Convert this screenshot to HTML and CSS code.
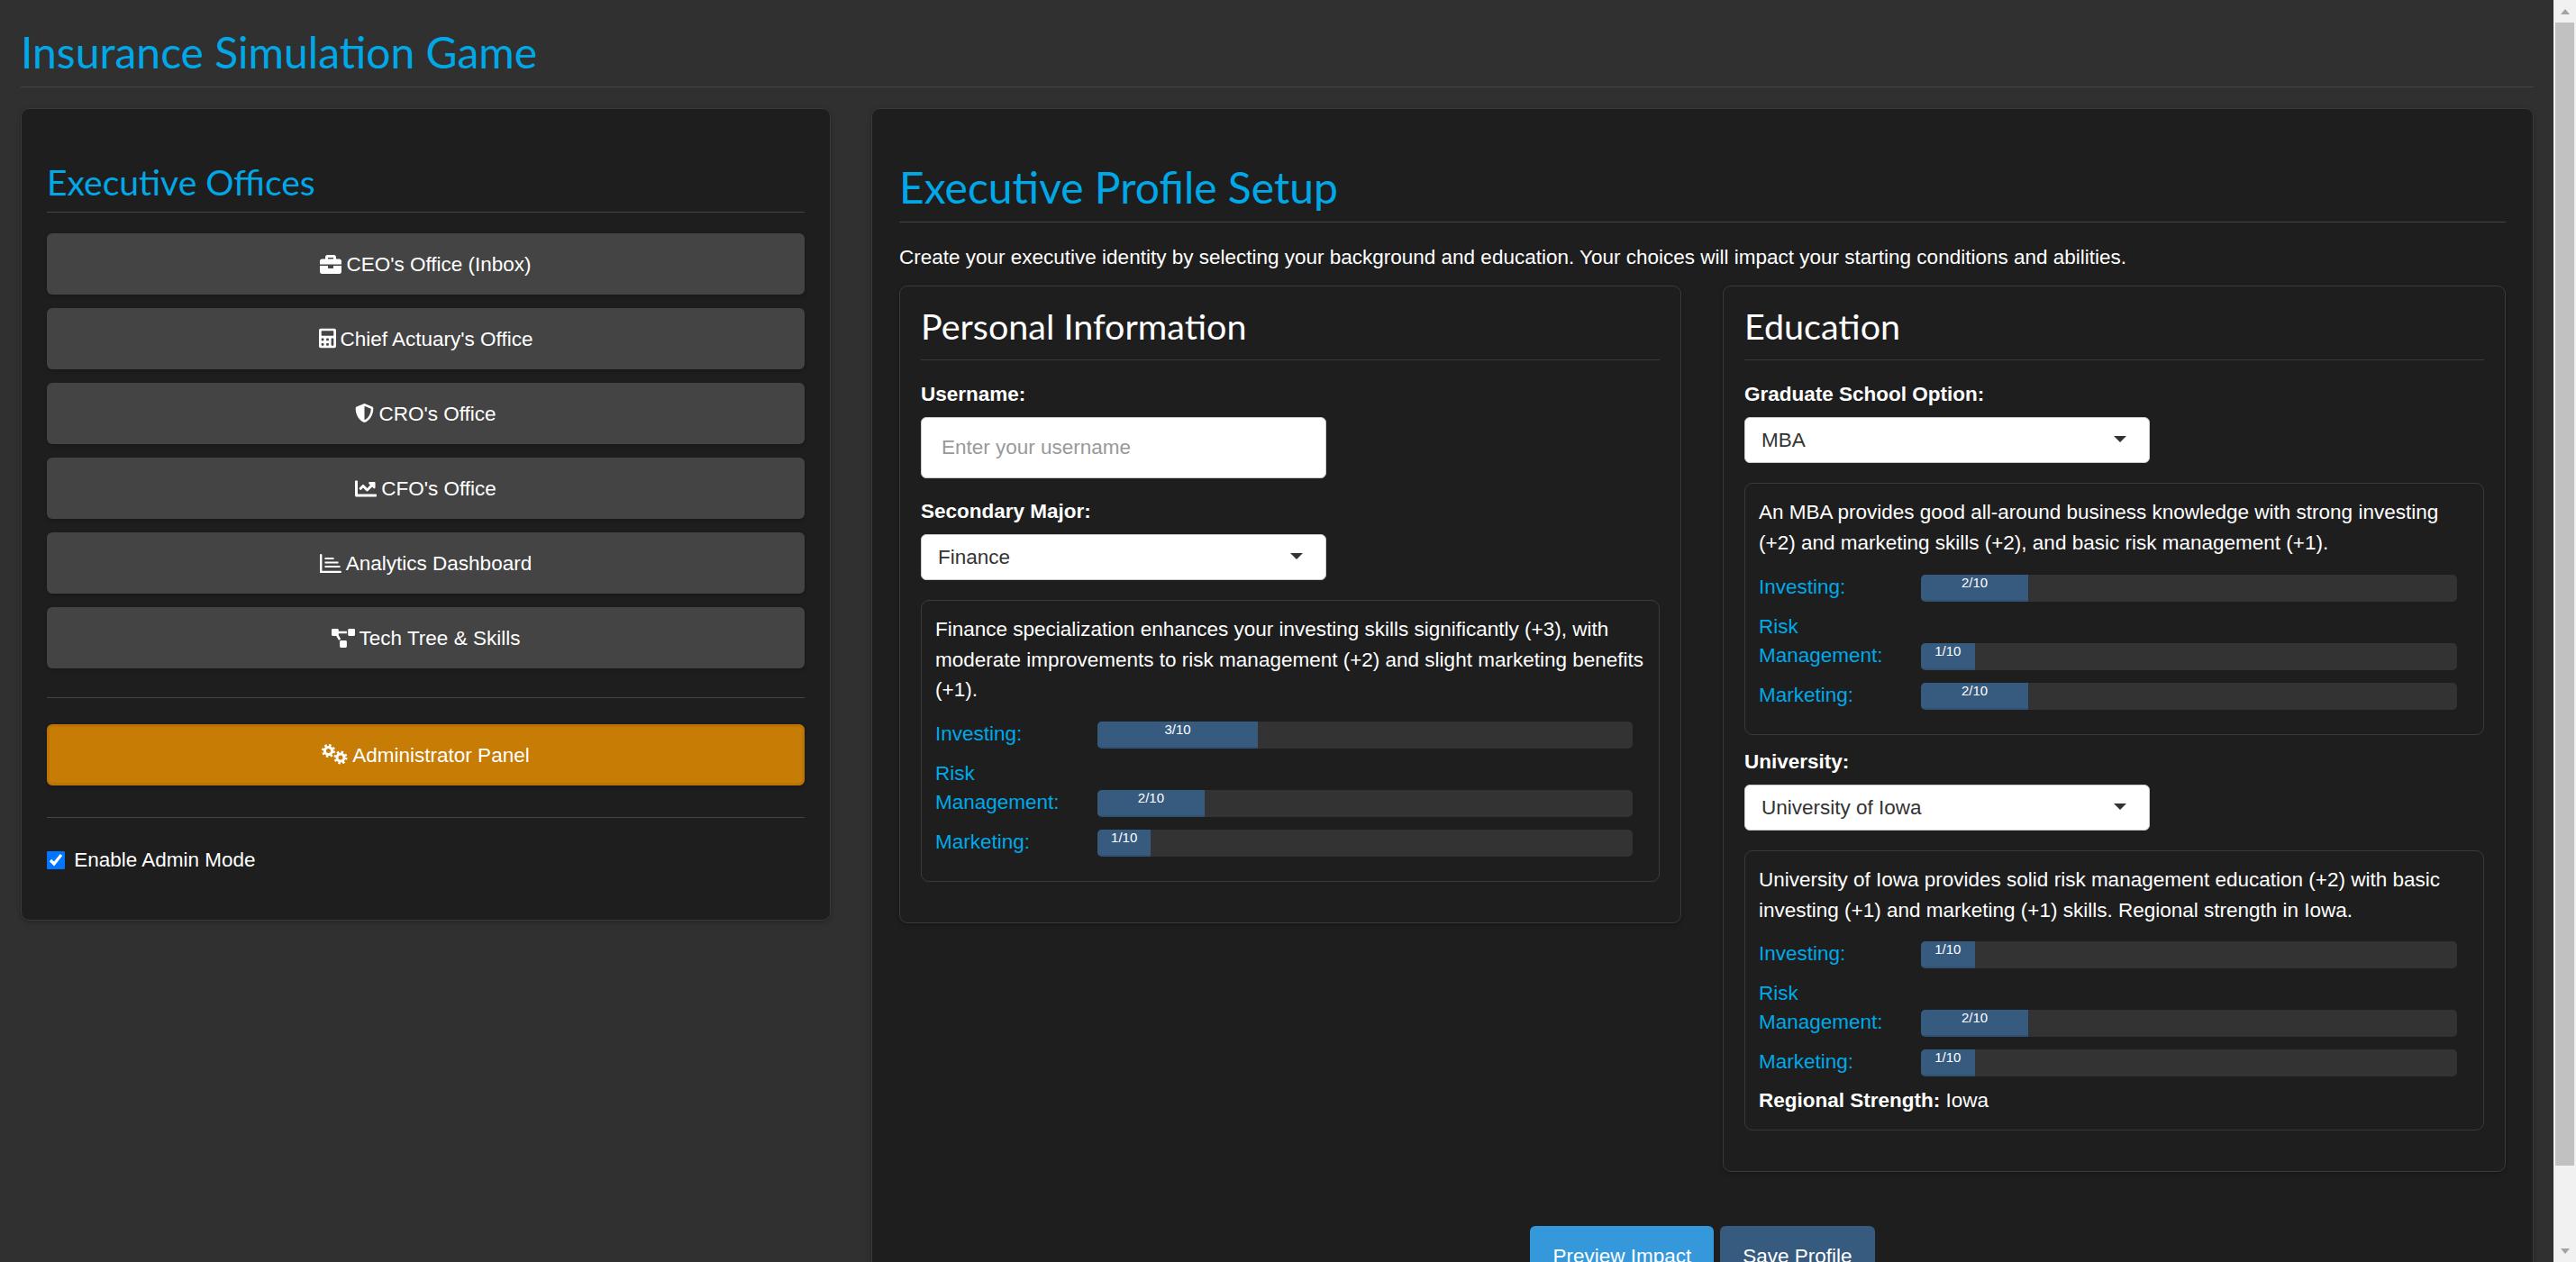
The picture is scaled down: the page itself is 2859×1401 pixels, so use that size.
FILE: index.html
```html
<!DOCTYPE html>
<html lang="en">
<head>
  <meta charset="UTF-8" />
  <title>Insurance Simulation Game</title>
  <link rel="stylesheet" href="styles.css">
</head>
<body>
  <h1 class="page-title">Insurance Simulation Game</h1>

  <div class="layout">
    <aside class="card sidebar">
      <h2 class="section-title side-title">Executive Offices</h2>

      <button class="btn nav-btn">
        <svg class="icon" width="24" height="21" viewBox="0 0 512 448"><path transform="translate(0 -32)" d="M320 336c0 8.84-7.16 16-16 16h-96c-8.84 0-16-7.16-16-16v-48H0v144c0 25.6 22.4 48 48 48h416c25.6 0 48-22.4 48-48V288H320v48zm144-208h-80V80c0-25.6-22.4-48-48-48H176c-25.6 0-48 22.4-48 48v48H48c-25.6 0-48 22.4-48 48v80h512v-80c0-25.6-22.4-48-48-48zm-144 0H192V96h128v32z"/></svg>CEO's Office (Inbox)
      </button>
      <button class="btn nav-btn">
        <svg class="icon" width="19" height="23" viewBox="0 0 448 512"><path d="M400 0H48C22.4 0 0 22.4 0 48v416c0 25.6 22.4 48 48 48h352c25.6 0 48-22.4 48-48V48c0-25.6-22.4-48-48-48zM128 435.2c0 6.4-6.4 12.8-12.8 12.8H76.8c-6.4 0-12.8-6.4-12.8-12.8v-38.4c0-6.4 6.4-12.8 12.8-12.8h38.4c6.4 0 12.8 6.4 12.8 12.8v38.4zm0-128c0 6.4-6.4 12.8-12.8 12.8H76.8c-6.4 0-12.8-6.4-12.8-12.8v-38.4c0-6.4 6.4-12.8 12.8-12.8h38.4c6.4 0 12.8 6.4 12.8 12.8v38.4zm128 128c0 6.4-6.4 12.8-12.8 12.8h-38.4c-6.4 0-12.8-6.4-12.8-12.8v-38.4c0-6.4 6.4-12.8 12.8-12.8h38.4c6.4 0 12.8 6.4 12.8 12.8v38.4zm0-128c0 6.4-6.4 12.8-12.8 12.8h-38.4c-6.4 0-12.8-6.4-12.8-12.8v-38.4c0-6.4 6.4-12.8 12.8-12.8h38.4c6.4 0 12.8 6.4 12.8 12.8v38.4zm128 128c0 6.4-6.4 12.8-12.8 12.8h-38.4c-6.4 0-12.8-6.4-12.8-12.8V268.8c0-6.4 6.4-12.8 12.8-12.8h38.4c6.4 0 12.8 6.4 12.8 12.8v166.4zm0-256c0 6.4-6.4 12.8-12.8 12.8H76.8c-6.4 0-12.8-6.4-12.8-12.8V76.8C64 70.4 70.4 64 76.8 64h294.4c6.4 0 12.8 6.4 12.8 12.8v102.4z"/></svg>Chief Actuary's Office
      </button>
      <button class="btn nav-btn">
        <svg class="icon" width="21" height="23" viewBox="0 0 512 512"><path d="M466.5 83.7l-192-80a48.15 48.15 0 0 0-36.9 0l-192 80C27.7 91.1 16 108.6 16 128c0 198.5 114.5 335.7 221.5 380.3 11.8 4.9 25.1 4.9 36.9 0C360.1 472.6 496 349.3 496 128c0-19.4-11.7-36.9-29.5-44.3zM256.1 446.3l-.1-381 175.9 73.3c-3.3 151.4-82.1 261.1-175.8 307.7z"/></svg>CRO's Office
      </button>
      <button class="btn nav-btn">
        <svg class="icon" width="24" height="21" viewBox="0 64 512 384"><path d="M496 384H64V80c0-8.84-7.16-16-16-16H16C7.16 64 0 71.16 0 80v336c0 17.67 14.33 32 32 32h464c8.84 0 16-7.16 16-16v-32c0-8.84-7.16-16-16-16zM464 96H345.94c-21.38 0-32.09 25.85-16.97 40.97l32.4 32.4L288 242.75l-73.37-73.37c-12.5-12.5-32.76-12.5-45.25 0l-68.69 68.69c-6.25 6.25-6.25 16.38 0 22.63l22.62 22.62c6.25 6.25 16.38 6.25 22.63 0L192 237.25l73.37 73.37c12.5 12.5 32.76 12.5 45.25 0l96-96 32.4 32.4c15.12 15.12 40.97 4.41 40.97-16.97V112c.01-8.84-7.15-16-16-16z"/></svg>CFO's Office
      </button>
      <button class="btn nav-btn">
        <svg class="icon" width="24" height="21" viewBox="0 0 24 21"><rect width="2.4" height="21" rx="1.2"/><rect y="18.8" width="24" height="2.2" rx="1.1"/><rect x="5.5" y="4" width="10" height="2"/><rect x="5.5" y="8.5" width="15" height="2"/><rect x="5.5" y="13" width="17" height="2"/></svg>Analytics Dashboard
      </button>
      <button class="btn nav-btn">
        <svg class="icon" width="26" height="21" viewBox="0 0 640 512"><path d="M384 320H256c-17.67 0-32 14.33-32 32v128c0 17.67 14.33 32 32 32h128c17.67 0 32-14.33 32-32V352c0-17.67-14.33-32-32-32zM192 32c0-17.67-14.33-32-32-32H32C14.33 0 0 14.33 0 32v128c0 17.67 14.33 32 32 32h95.72l73.16 128.04C211.98 300.98 232.4 288 256 288h.28L192 175.51V128h224V64H192V32zM608 0H480c-17.67 0-32 14.33-32 32v128c0 17.67 14.33 32 32 32h128c17.67 0 32-14.33 32-32V32c0-17.67-14.33-32-32-32z"/></svg>Tech Tree &amp; Skills
      </button>

      <hr class="side-rule first-rule">

      <button class="btn admin-btn">
        <svg class="icon" width="29" height="23" viewBox="0 0 29 23"><g fill="none" stroke="#fff" stroke-width="3"><circle cx="7.5" cy="7.5" r="4"/><circle cx="7.5" cy="7.5" r="6" stroke-dasharray="2.35 2.35"/><circle cx="21" cy="15" r="4"/><circle cx="21" cy="15" r="6" stroke-dasharray="2.35 2.35"/></g></svg>Administrator Panel
      </button>

      <hr class="side-rule">

      <label class="admin-toggle"><input type="checkbox" checked> Enable Admin Mode</label>
    </aside>

    <main class="card profile">
      <h2 class="section-title profile-title">Executive Profile Setup</h2>
      <p class="intro">Create your executive identity by selecting your background and education. Your choices will impact your starting conditions and abilities.</p>

      <div class="columns">
        <section class="card sub-card">
          <h3 class="sub-title">Personal Information</h3>

          <label class="field-label">Username:</label>
          <input class="text-input" type="text" placeholder="Enter your username">

          <label class="field-label">Secondary Major:</label>
          <div class="select-wrap">
            <select><option>Finance</option></select>
          </div>

          <div class="desc-box">
            <p>Finance specialization enhances your investing skills significantly (+3), with moderate improvements to risk management (+2) and slight marketing benefits (+1).</p>
            <div class="skill-row">
              <span class="skill-name">Investing:</span>
              <div class="bar"><div class="bar-fill" style="width: 30%">3/10</div></div>
            </div>
            <div class="skill-row">
              <span class="skill-name">Risk Management:</span>
              <div class="bar"><div class="bar-fill" style="width: 20%">2/10</div></div>
            </div>
            <div class="skill-row">
              <span class="skill-name">Marketing:</span>
              <div class="bar"><div class="bar-fill" style="width: 10%">1/10</div></div>
            </div>
          </div>
        </section>

        <section class="card sub-card">
          <h3 class="sub-title">Education</h3>

          <label class="field-label">Graduate School Option:</label>
          <div class="select-wrap">
            <select><option>MBA</option></select>
          </div>

          <div class="desc-box">
            <p>An MBA provides good all-around business knowledge with strong investing (+2) and marketing skills (+2), and basic risk management (+1).</p>
            <div class="skill-row">
              <span class="skill-name">Investing:</span>
              <div class="bar"><div class="bar-fill" style="width: 20%">2/10</div></div>
            </div>
            <div class="skill-row">
              <span class="skill-name">Risk Management:</span>
              <div class="bar"><div class="bar-fill" style="width: 10%">1/10</div></div>
            </div>
            <div class="skill-row">
              <span class="skill-name">Marketing:</span>
              <div class="bar"><div class="bar-fill" style="width: 20%">2/10</div></div>
            </div>
          </div>

          <label class="field-label">University:</label>
          <div class="select-wrap">
            <select><option>University of Iowa</option></select>
          </div>

          <div class="desc-box">
            <p>University of Iowa provides solid risk management education (+2) with basic investing (+1) and marketing (+1) skills. Regional strength in Iowa.</p>
            <div class="skill-row">
              <span class="skill-name">Investing:</span>
              <div class="bar"><div class="bar-fill" style="width: 10%">1/10</div></div>
            </div>
            <div class="skill-row">
              <span class="skill-name">Risk Management:</span>
              <div class="bar"><div class="bar-fill" style="width: 20%">2/10</div></div>
            </div>
            <div class="skill-row">
              <span class="skill-name">Marketing:</span>
              <div class="bar"><div class="bar-fill" style="width: 10%">1/10</div></div>
            </div>
            <div class="regional"><strong>Regional Strength:</strong> Iowa</div>
          </div>
        </section>
      </div>

      <div class="actions">
        <button class="btn action-btn preview-btn">Preview Impact</button>
        <button class="btn action-btn save-btn">Save Profile</button>
      </div>
    </main>
  </div>

  <div class="scrollbar">
    <span class="scroll-arrow arrow-up"></span>
    <div class="scroll-thumb"></div>
    <span class="scroll-arrow arrow-down"></span>
  </div>
</body>
</html>
```

FILE: styles.css
```css
body {
  background-color: #303030;
  color: #fff;
  font-family: "Liberation Sans", Arial, sans-serif;
  font-size: 22.5px;
  line-height: 1.5;
  margin: 0;
  padding: 0 47px 32px 23px;
}

/* drawn by hand, the capture hides the real one */
.scrollbar {
  position: fixed;
  top: 0;
  right: 0;
  bottom: 0;
  width: 25px;
  background-color: #f1f1f1;
  display: flex;
  flex-direction: column;
  align-items: center;
  justify-content: space-between;
}

.scroll-arrow {
  flex: 0 0 25px;
  width: 100%;
  display: flex;
  align-items: center;
  justify-content: center;
}

.scroll-arrow::after {
  content: "";
  border-left: 5.5px solid transparent;
  border-right: 5.5px solid transparent;
}

.arrow-up::after {
  border-bottom: 6px solid #a3a3a3;
}

.arrow-down::after {
  border-top: 6px solid #a3a3a3;
}

.scroll-thumb {
  width: 21px;
  height: 1269px;
  margin-bottom: auto;
  background-color: #c1c1c1;
}

h1, h2, h3 {
  font-family: Lato, sans-serif;
  font-weight: 400;
  line-height: 1.2;
  margin: 0;
}

.page-title {
  color: #00a8e8;
  font-size: 48px;
  padding: 29px 0 9px;
  border-bottom: 1px solid #444;
  margin-bottom: 23px;
}

.layout {
  display: grid;
  grid-template-columns: 899px 1fr;
  gap: 45px;
  align-items: start;
}

.card {
  background-color: #1e1e1e;
  border: 1px solid #3a3a3a;
  border-radius: 9px;
  box-shadow: 0 2px 5px rgba(0, 0, 0, 0.25);
}

.sidebar {
  padding: 28px 28px 49px;
}

.section-title {
  color: #00a8e8;
  border-bottom: 1px solid #444;
}

.side-title {
  font-size: 39px;
  margin-top: 30px;
  padding-bottom: 10px;
  margin-bottom: 23px;
}

.btn {
  color: #fff;
  font-family: inherit;
  font-size: 22.5px;
  line-height: 33.75px;
  border: 1px solid transparent;
  border-radius: 6px;
  cursor: pointer;
}

.nav-btn, .admin-btn {
  display: block;
  width: 100%;
  height: 68px;
  padding: 0;
  margin-bottom: 15px;
  background-color: #444;
  box-shadow: 0 2px 4px rgba(0, 0, 0, 0.2);
}

.admin-btn {
  background-color: #c67c05;
  border: 3px solid #bb7505;
  margin-bottom: 0;
}

.icon {
  fill: #fff;
  vertical-align: -3px;
  margin-right: 5px;
}

.side-rule {
  border: 0;
  border-top: 1px solid #444;
  margin: 0;
}

.first-rule {
  margin: 32px 0 29px;
}

.admin-btn + .side-rule {
  margin: 35px 0 0;
}

.admin-toggle {
  display: flex;
  align-items: center;
  gap: 0.45em;
  margin-top: 30px;
}

.admin-toggle input {
  width: 20px;
  height: 20px;
  margin: 0;
}

.profile {
  padding: 30px;
}

.profile-title {
  font-size: 48px;
  margin-top: 28px;
  padding-bottom: 9.4px;
  margin-bottom: 22px;
}

.intro {
  margin: 0 0 15px;
}

.columns {
  display: grid;
  grid-template-columns: 868px 1fr;
  gap: 46px;
  align-items: start;
}

.sub-card {
  padding: 20px 23px 45px;
}

.sub-title {
  font-size: 39.5px;
  color: #fff;
  padding-bottom: 13.6px;
  border-bottom: 1px solid #3a3a3a;
  margin-bottom: 21px;
}

.field-label {
  display: block;
  font-weight: 700;
  margin-bottom: 8px;
}

.text-input {
  display: block;
  box-sizing: border-box;
  width: 450px;
  height: 68px;
  padding: 0 22px;
  font-family: inherit;
  font-size: 22.5px;
  background: #fff;
  border: 1px solid #ccc;
  border-radius: 6px;
  margin-bottom: 20px;
}

.text-input::placeholder {
  color: #999;
}

.select-wrap {
  position: relative;
  width: 450px;
  margin-bottom: 22px;
}

.select-wrap select {
  display: block;
  box-sizing: border-box;
  width: 100%;
  height: 51px;
  padding: 0 18px;
  appearance: none;
  font-family: inherit;
  font-size: 22.5px;
  color: #333;
  background: #fff;
  border: 1px solid #ccc;
  border-radius: 6px;
}

.select-wrap::after {
  content: "";
  position: absolute;
  right: 26px;
  top: 21px;
  border-left: 7px solid transparent;
  border-right: 7px solid transparent;
  border-top: 7px solid #333;
}

.desc-box {
  border: 1px solid #3a3a3a;
  border-radius: 9px;
  padding: 15px;
  margin-bottom: 13.5px;
}

.sub-card .desc-box:last-child {
  margin-bottom: 0;
}

.desc-box p {
  margin: 0 0 16px;
}

.skill-row {
  display: flex;
  align-items: flex-end;
  padding-right: 14px;
  margin-bottom: 12px;
}

.skill-name {
  flex: 0 0 180px;
  color: #00a8e8;
  line-height: 32px;
  padding-right: 30px;
  box-sizing: border-box;
}

.bar {
  flex: 1;
  height: 30px;
  background-color: #333;
  border-radius: 5px;
  overflow: hidden;
}

.bar-fill {
  height: 100%;
  background-color: #375a7f;
  box-shadow: inset 0 -2px 0 rgba(0, 0, 0, 0.1);
  font-size: 15px;
  line-height: 17px;
  text-align: center;
}

.regional {
  margin-top: -2px;
}

.actions {
  display: flex;
  justify-content: center;
  gap: 7px;
  margin-top: 60px;
}

.action-btn {
  height: 68px;
  padding: 0 24px;
}

.preview-btn {
  background-color: #3498db;
}

.save-btn {
  background-color: #375a7f;
}
```
